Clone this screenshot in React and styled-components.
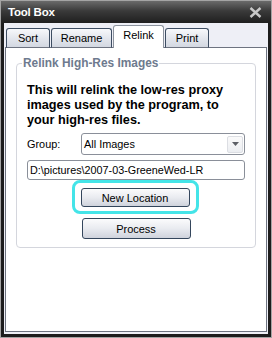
import { createGlobalStyle, styled } from "styled-components";

const Global = createGlobalStyle`
  html, body {
    margin: 0;
    padding: 0;
    background: #fff;
  }
  body {
    font-family: "Liberation Sans", Arial, sans-serif;
  }
`;

const Window = styled.div`
  box-sizing: border-box;
  width: 272px;
  height: 338px;
  border: 1px solid #a4a4a4;
  background: #1d1d1d;
  padding: 0 3px 3px 3px;
  display: flex;
  flex-direction: column;
`;

const TitleBar = styled.div`
  height: 22px;
  margin: 0 -3px;
  padding: 0 9px 0 7px;
  background: linear-gradient(#6a6a6a 0%, #3a3a3a 45%, #1f1f1f 100%);
  display: flex;
  align-items: center;
  justify-content: space-between;
`;

const Title = styled.span`
  color: #fff;
  font-weight: bold;
  font-size: 11.5px;
  letter-spacing: -0.2px;
`;

const Body = styled.div`
  flex: 1;
  background: #eeeff6;
  padding: 3px 1px 2px 1px;
  display: flex;
  flex-direction: column;
`;

const Tabs = styled.div`
  display: flex;
  align-items: flex-end;
  height: 22px;
  padding-left: 1px;
  position: relative;
  z-index: 1;
  margin-bottom: -1px;
`;

const Tab = styled.div`
  box-sizing: border-box;
  height: ${(p) => (p.$active ? "23px" : "20px")};
  width: ${(p) => p.$w}px;
  margin-right: 1px;
  border: 1px solid ${(p) => (p.$active ? "#8c939e" : "#3d4d62")};
  border-bottom: ${(p) => (p.$active ? "none" : "1px solid #6d7380")};
  border-radius: 3px 3px 0 0;
  background: ${(p) =>
    p.$active ? "#fff" : "linear-gradient(#f7f8fb, #e2e5ec 55%, #d3d8e1)"};
  color: #000;
  font-size: 11px;
  display: flex;
  justify-content: center;
  padding-top: 3px;
`;

const Panel = styled.div`
  flex: 1;
  background: #fff;
  border: 1px solid #6d7380;
  padding: 8px 10px 0 10px;
`;

const Group = styled.fieldset`
  margin: 0;
  border: 1px solid #d4d6dd;
  border-radius: 4px;
  padding: 2px 10px 8px 10px;
`;

const Legend = styled.legend`
  color: #6e7a8e;
  font-weight: bold;
  font-size: 11.9px;
  padding: 0 1px;
  margin-left: -5px;
`;

const Intro = styled.p`
  margin: 11px 0 5px 0;
  font-weight: bold;
  font-size: 12.7px;
  line-height: 15px;
  color: #000;
`;

const Row = styled.div`
  display: flex;
  align-items: center;
  margin-bottom: 5px;
`;

const Label = styled.span`
  width: 54px;
  font-size: 10.9px;
  color: #000;
`;

const Select = styled.div`
  box-sizing: border-box;
  flex: 1;
  height: 22px;
  border: 1px solid #8a8f99;
  border-radius: 3px;
  background: #fff;
  display: flex;
  align-items: center;
  padding: 0 1px 0 2px;
  font-size: 10.9px;
`;

const SelectText = styled.span`
  flex: 1;
`;

const DropButton = styled.span`
  box-sizing: border-box;
  width: 16px;
  height: 17px;
  border: 1px solid #dcdee3;
  border-radius: 2px;
  background: linear-gradient(#fafafa, #eceef2);
  display: flex;
  align-items: center;
  justify-content: center;
`;

const Input = styled.div`
  box-sizing: border-box;
  height: 20px;
  border: 1px solid #8a8f99;
  border-radius: 3px;
  padding: 0 2px;
  display: flex;
  align-items: center;
  font-size: 10.8px;
`;

const Buttons = styled.div`
  display: flex;
  flex-direction: column;
  align-items: center;
  gap: 4px;
`;

const FocusRing = styled.div`
  border: 3px solid #44e4e8;
  border-radius: 8px;
  padding: 5px 6px 4px 6px;
  margin-left: -2px;
`;

const Button = styled.div`
  box-sizing: border-box;
  width: 109px;
  height: ${(p) => (p.$tall ? "21px" : "19px")};
  border: 1px solid #34465c;
  border-radius: 3px;
  background: linear-gradient(#fbfbfc, #e9ebf0 50%, #cfd3dc);
  font-size: 11px;
  color: #000;
  display: flex;
  align-items: center;
  justify-content: center;
`;

const tabs = [
  { label: "Sort", w: 44 },
  { label: "Rename", w: 61 },
  { label: "Relink", w: 51, active: true },
  { label: "Print", w: 44 },
];

export default function App() {
  return (
    <>
      <Global />
      <Window>
        <TitleBar>
          <Title>Tool Box</Title>
          <svg width="13" height="11" viewBox="0 0 13 11">
            <path
              d="M1.5 1 L11.5 10 M11.5 1 L1.5 10"
              stroke="#c9c9c9"
              strokeWidth="2.4"
            />
          </svg>
        </TitleBar>
        <Body>
          <Tabs>
            {tabs.map((t) => (
              <Tab key={t.label} $w={t.w} $active={t.active}>
                {t.label}
              </Tab>
            ))}
          </Tabs>
          <Panel>
            <Group>
              <Legend>Relink High-Res Images</Legend>
              <Intro>
                This will relink the low-res proxy images used by the program,
                to your high-res files.
              </Intro>
              <Row>
                <Label>Group:</Label>
                <Select>
                  <SelectText>All Images</SelectText>
                  <DropButton>
                    <svg width="7" height="4" viewBox="0 0 7 4">
                      <path d="M0 0 H7 L3.5 4 Z" fill="#5c5f66" />
                    </svg>
                  </DropButton>
                </Select>
              </Row>
              <Input>D:\pictures\2007-03-GreeneWed-LR</Input>
              <Buttons>
                <FocusRing>
                  <Button>New Location</Button>
                </FocusRing>
                <Button $tall>Process</Button>
              </Buttons>
            </Group>
          </Panel>
        </Body>
      </Window>
    </>
  );
}
